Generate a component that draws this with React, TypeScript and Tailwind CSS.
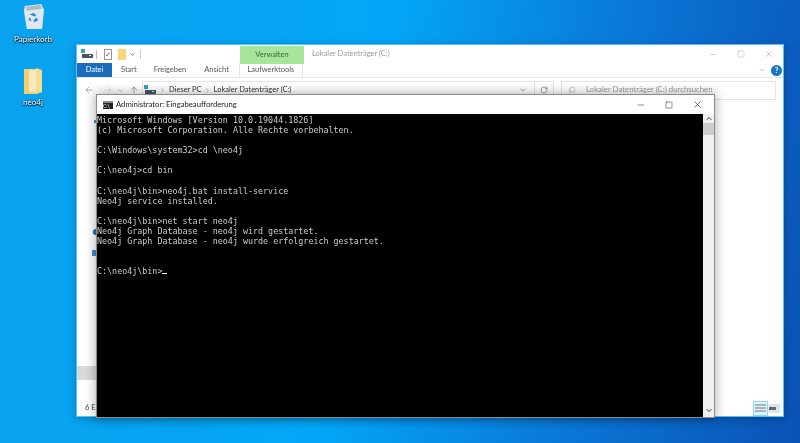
import React from 'react';
import { ArrowLeft, ArrowRight, ArrowUp, ChevronDown, ChevronRight, ChevronUp, Minus, RotateCw, Search, Square, X } from 'lucide-react';

const consoleLines = [
    'Microsoft Windows [Version 10.0.19044.1826]',
    '(c) Microsoft Corporation. Alle Rechte vorbehalten.',
    '',
    'C:\\Windows\\system32>cd \\neo4j',
    '',
    'C:\\neo4j>cd bin',
    '',
    'C:\\neo4j\\bin>neo4j.bat install-service',
    'Neo4j service installed.',
    '',
    'C:\\neo4j\\bin>net start neo4j',
    'Neo4j Graph Database - neo4j wird gestartet.',
    'Neo4j Graph Database - neo4j wurde erfolgreich gestartet.',
    '',
    '',
];

function DriveIcon({ className }: { className?: string }) {
    return (
        <svg viewBox="0 0 12 10" className={className}>
            <rect x="0" y="0" width="4" height="4" fill="#2aa5c9" />
            <rect x="1" y="5" width="11" height="4" fill="#4a5560" />
            <rect x="8" y="6" width="2" height="1" fill="#e8e8e8" />
        </svg>
    );
}

function FolderIcon({ className }: { className?: string }) {
    return (
        <svg viewBox="0 0 20 28" className={className}>
            <path d="M1 3h12l6 2v21l-6 2H1z" fill="#f3cf6e" />
            <path d="M6 4h13v22H6z" fill="#f8e9c0" />
            <path d="M13 2l6 2v22l-6 2z" fill="#f6dc8e" />
        </svg>
    );
}

function RecycleBin({ className }: { className?: string }) {
    return (
        <svg viewBox="0 0 24 28" className={className}>
            <path d="M3 3l17-2 3 6-2 20H5L2 8z" fill="#dfe8ee" />
            <path d="M4 4l15-2 2 4-16 2z" fill="#a9bcc8" />
            <path d="M8 12l4-2 3 3-2 1zM15 15l2 3-4 2-1-2zM7 15l2 1 1 3-3-1z" fill="#2f8fd8" />
        </svg>
    );
}

function DesktopIcon({ label, className, children }: { label: string; className: string; children: React.ReactNode }) {
    return (
        <div className={`absolute flex flex-col items-center ${className}`}>
            {children}
            <span className="text-[8px] leading-[10px] text-white [text-shadow:0_0_2px_#000,0_1px_1px_#000]">{label}</span>
        </div>
    );
}

function ExplorerWindow() {
    return (
        <div className="absolute left-[76px] top-[44px] w-[708px] h-[373px] flex flex-col bg-white border border-[#5cc3ee] shadow-[0_2px_8px_rgba(0,0,0,0.25)] text-[7.5px] text-[#555]">
            {/* Title row */}
            <div className="h-[18px] flex items-center shrink-0">
                <DriveIcon className="ml-[4px] w-[12px] h-[10px]" />
                <div className="ml-[3px] w-px h-[9px] bg-[#bbb]" />
                <div className="ml-[7px] w-[8px] h-[11px] border border-[#999] bg-white text-[7px] leading-[9px] text-center text-[#c33]">✓</div>
                <div className="ml-[6px] w-[8px] h-[11px] bg-[#f6d77e]" />
                <ChevronDown className="ml-[3px] w-[7px] h-[7px] text-[#333]" />
                <div className="ml-[4px] w-px h-[9px] bg-[#ccc]" />
                <div className="ml-[99px] self-start mt-[1px] w-[64px] h-[18px] bg-[#a6e59a] text-center leading-[17px] text-[#3c6b3c] z-10">Verwalten</div>
                <span className="ml-[8px] text-[#9a9a9a]">Lokaler Datenträger (C:)</span>
                <Minus className="ml-auto w-[9px] h-[9px] text-[#999]" strokeWidth={1.2} />
                <Square className="ml-[19px] w-[8px] h-[8px] text-[#999]" strokeWidth={1.2} />
                <X className="ml-[19px] mr-[9px] w-[10px] h-[10px] text-[#999]" strokeWidth={1.2} />
            </div>
            {/* Ribbon tabs */}
            <div className="h-[15px] flex items-center shrink-0 border-b border-[#e8e8e8]">
                <div className="w-[35px] h-full bg-[#1a6cbd] text-white text-center leading-[14px]">Datei</div>
                <span className="ml-[9px]">Start</span>
                <span className="ml-[17px]">Freigeben</span>
                <span className="ml-[18px]">Ansicht</span>
                <div className="ml-[10px] w-[64px] h-[15px] border-x border-[#d8e8d8] text-center leading-[13px]">Laufwerktools</div>
                <ChevronDown className="ml-auto w-[8px] h-[8px] text-[#aaa]" />
                <div className="ml-[5px] mr-[1px] w-[11px] h-[11px] rounded-full bg-[#1a72c4] text-white text-[8px] font-bold leading-[11px] text-center">?</div>
            </div>
            {/* Address row */}
            <div className="h-[22px] flex items-center shrink-0 mt-[1px]">
                <ArrowLeft className="ml-[7px] w-[10px] h-[10px] text-[#777]" strokeWidth={1.4} />
                <ArrowRight className="ml-[9px] w-[10px] h-[10px] text-[#ccc]" strokeWidth={1.4} />
                <ChevronDown className="ml-[4px] w-[7px] h-[7px] text-[#999]" />
                <ArrowUp className="ml-[5px] w-[10px] h-[10px] text-[#666]" strokeWidth={1.4} />
                <div className="ml-[3px] w-[412px] h-[19px] flex items-center border border-[#e4e4e4] text-[#333]">
                    <DriveIcon className="ml-[1px] w-[12px] h-[10px]" />
                    <ChevronRight className="ml-[3px] w-[7px] h-[7px] text-[#888]" />
                    <span className="ml-[3px]">Dieser PC</span>
                    <ChevronRight className="ml-[2px] w-[7px] h-[7px] text-[#888]" />
                    <span className="ml-[3px]">Lokaler Datenträger (C:)</span>
                    <ChevronDown className="ml-auto mr-[7px] w-[8px] h-[8px] text-[#777]" />
                    <div className="w-px h-full bg-[#e4e4e4]" />
                    <RotateCw className="mx-[5px] w-[8px] h-[8px] text-[#777]" />
                </div>
                <div className="ml-[7px] w-[215px] h-[19px] flex items-center border border-[#e4e4e4] text-[#999] text-[7.8px]">
                    <Search className="ml-[6px] w-[8px] h-[8px] -scale-x-100 text-[#aaa]" />
                    <span className="ml-[10px]">Lokaler Datenträger (C:) durchsuchen</span>
                </div>
            </div>
            {/* Navigation pane and file list */}
            <div className="flex-1 flex min-h-0">
                <div className="w-[20px] flex flex-col justify-end pb-[20px]">
                    <div className="h-[14px] bg-[#d9d9d9]" />
                </div>
                <div className="flex-1" />
            </div>
            {/* Status bar */}
            <div className="h-[16px] flex items-center shrink-0 text-[#444]">
                <span className="ml-[8px]">6 El</span>
                <div className="ml-auto w-[15px] h-[15px] border border-[#8ad8ec] bg-[#dff3fa] flex flex-col justify-center gap-px px-px">
                    <div className="h-[2px] bg-[#a8b4bc]" />
                    <div className="h-[2px] bg-[#a8b4bc]" />
                    <div className="h-[2px] bg-[#a8b4bc]" />
                </div>
                <div className="ml-px mr-[3px] w-[11px] h-[9px] bg-[#dbe4ea] flex items-center">
                    <div className="w-[7px] h-[3px] bg-[#5a6a78]" />
                </div>
            </div>
        </div>
    );
}

function ConsoleWindow() {
    return (
        <div className="absolute left-[97px] top-[95px] w-[617px] h-[322px] flex flex-col bg-white shadow-[0_0_0_1px_#8c8c8c,0_0_10px_2px_rgba(0,0,0,0.3)]">
            <div className="h-[19px] flex items-center shrink-0 text-[7.7px] text-[#222]">
                <div className="ml-[6px] w-[10px] h-[8px] bg-[#222] border-t-2 border-[#888] text-[5px] leading-[6px] text-white">C:\</div>
                <span className="ml-[3px]">Administrator: Eingabeaufforderung</span>
                <Minus className="ml-auto w-[10px] h-[10px] text-[#333]" strokeWidth={1.3} />
                <Square className="ml-[19px] w-[8px] h-[8px] text-[#222]" strokeWidth={1.5} />
                <X className="ml-[19px] mr-[11px] w-[11px] h-[11px] text-[#222]" strokeWidth={1.3} />
            </div>
            <div className="flex-1 flex min-h-0">
                <div className="flex-1 bg-black pt-px font-['DejaVu_Sans_Mono',monospace] text-[8.37px] leading-[10.1px] text-[#cccccc] whitespace-pre">
                    {consoleLines.map((line, i) => (
                        <div key={i} className="h-[10.1px]">{line}</div>
                    ))}
                    <div className="h-[10.1px]">
                        C:\neo4j\bin&gt;<span className="inline-block w-[5px] h-[1.5px] bg-white align-baseline" />
                    </div>
                </div>
                <div className="w-[11px] flex flex-col bg-[#f0f0f0] items-center">
                    <ChevronUp className="w-[8px] h-[9px] text-[#333]" strokeWidth={3} />
                    <div className="w-full h-[12px] bg-[#cdcdcd]" />
                    <div className="flex-1" />
                    <ChevronDown className="w-[8px] h-[9px] mb-[2px] text-[#333]" strokeWidth={3} />
                </div>
            </div>
        </div>
    );
}

export default function App() {
    return (
        <div className="relative w-[800px] h-[443px] overflow-hidden blur-[0.35px] font-['Lato',sans-serif] bg-[linear-gradient(100deg,#0aa2ee_0%,#03a6f6_45%,#0a78d8_72%,#0a52b4_100%)]">
            <DesktopIcon label="Papierkorb" className="left-[13px] top-[3px] w-[40px] gap-[4px]">
                <RecycleBin className="w-[23px] h-[27px]" />
            </DesktopIcon>
            <DesktopIcon label="neo4j" className="left-[13px] top-[66px] w-[40px] gap-[3px]">
                <FolderIcon className="w-[20px] h-[28px]" />
            </DesktopIcon>

            <ExplorerWindow />

            {/* nav pane icons peeking out left of the console */}
            <div className="absolute left-[93px] top-[229px] w-[5px] h-[6px] rounded-full bg-[#1a72c4]" />
            <div className="absolute left-[92px] top-[250px] w-[6px] h-[6px] bg-[#3b8ad0]" />
            <div className="absolute left-[94px] top-[120px] w-[3px] h-[3px] bg-[#3b8ad0]" />

            <ConsoleWindow />
        </div>
    );
}
